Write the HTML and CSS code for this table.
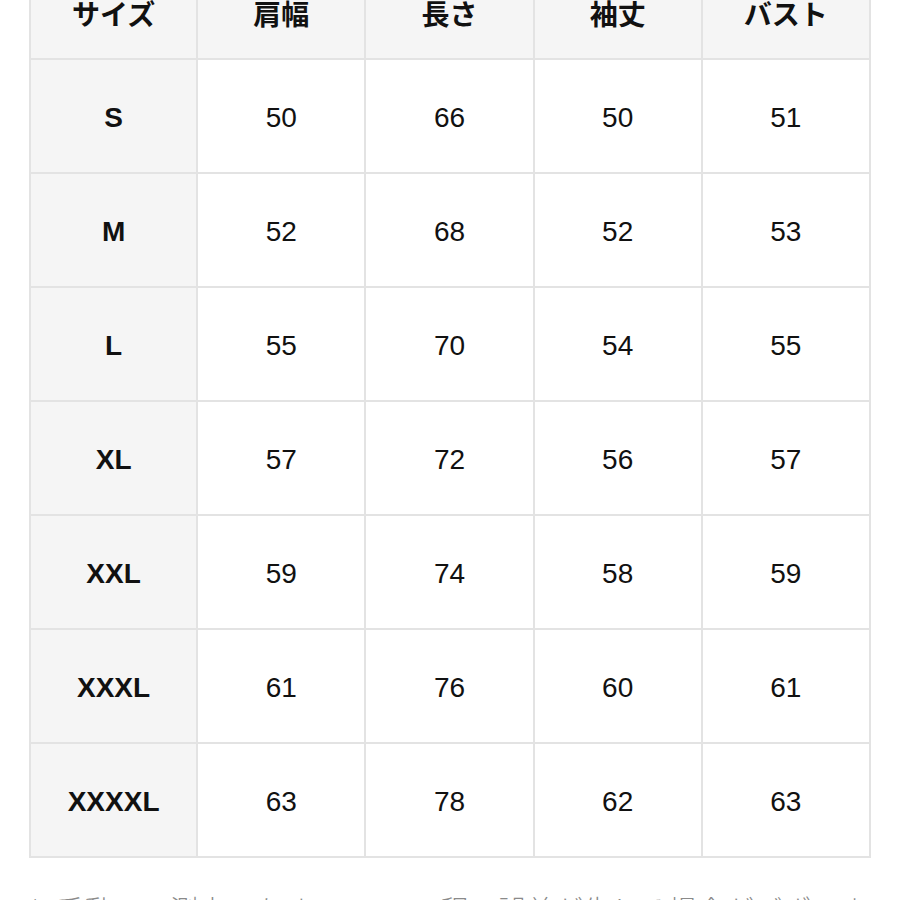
FILE: index.html
```html
<!DOCTYPE html>
<html lang="ja">
<head>
<meta charset="utf-8">
<link rel="stylesheet" href="styles.css">
</head>
<body>
<div class="page">
  <table class="size-table">
    <thead>
      <tr>
        <th class="first">サイズ</th><th>肩幅</th><th>長さ</th><th>袖丈</th><th>バスト</th>
      </tr>
    </thead>
    <tbody>
      <tr><th>S</th><td>50</td><td>66</td><td>50</td><td>51</td></tr>
      <tr><th>M</th><td>52</td><td>68</td><td>52</td><td>53</td></tr>
      <tr><th>L</th><td>55</td><td>70</td><td>54</td><td>55</td></tr>
      <tr><th>XL</th><td>57</td><td>72</td><td>56</td><td>57</td></tr>
      <tr><th>XXL</th><td>59</td><td>74</td><td>58</td><td>59</td></tr>
      <tr><th>XXXL</th><td>61</td><td>76</td><td>60</td><td>61</td></tr>
      <tr><th>XXXXL</th><td>63</td><td>78</td><td>62</td><td>63</td></tr>
    </tbody>
  </table>
  <p class="note">*: 手動での測定のため、1～3cm程の誤差が生じる場合がございます。</p>
</div>
</body>
</html>
```
FILE: styles.css
```css
html, body {
  margin: 0;
  padding: 0;
  background: #ffffff;
}
body {
  font-family: "Liberation Sans", Arial, "Noto Sans CJK JP", sans-serif;
  color: #111111;
  overflow: hidden;
}
.page {
  padding-left: 29px;
  width: 900px;
  box-sizing: border-box;
}
.size-table {
  border-collapse: collapse;
  margin-top: -30px;
  table-layout: fixed;
  width: 842px;
}
.size-table th,
.size-table td {
  width: 166px;
  border: 2px solid #e3e3e3;
  padding: 3px 0 0 0;
  text-align: center;
  vertical-align: middle;
  font-size: 28px;
  height: 109px;
}
.size-table th.first {
  width: 165px;
}
.size-table thead th {
  height: 82px;
  padding: 0 0 4px 0;
  background: #f5f5f5;
  font-weight: bold;
}
.size-table tbody th {
  background: #f5f5f5;
  font-weight: bold;
}
.size-table td {
  background: #ffffff;
  font-weight: normal;
}
.note {
  margin: 31px 0 0 0;
  width: 842px;
  font-family: "Noto Sans CJK JP", sans-serif;
  font-weight: 300;
  font-size: 28px;
  letter-spacing: 0.5px;
  line-height: 40px;
  color: #8a8a8a;
}
```
